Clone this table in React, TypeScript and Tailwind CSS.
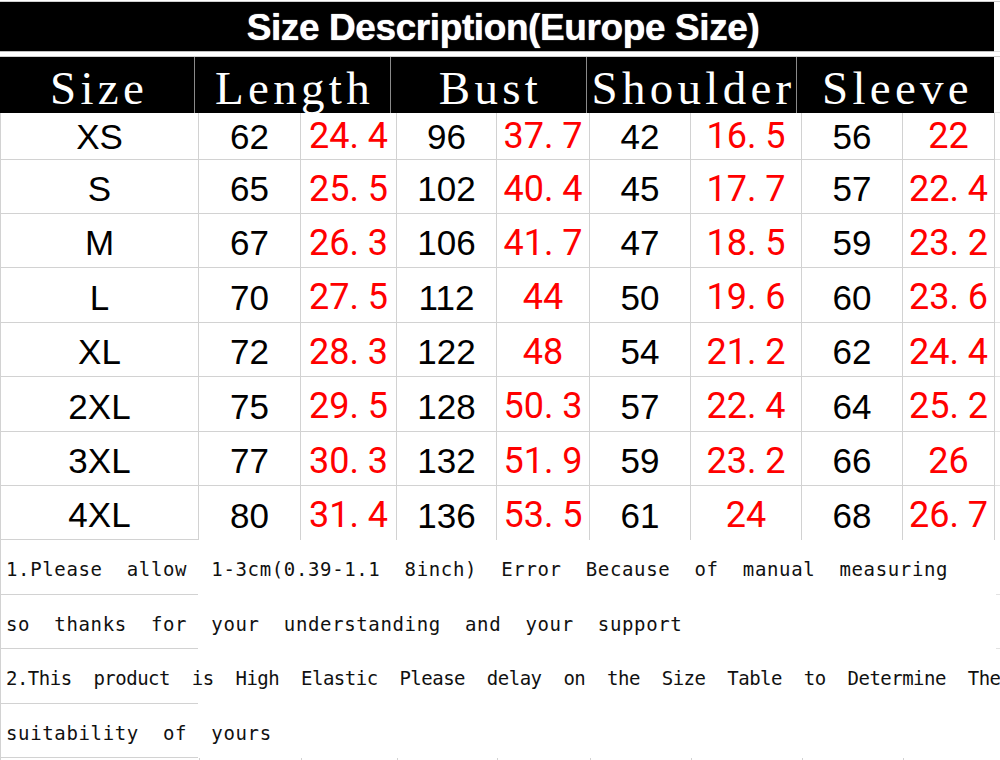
import React from "react";

const rows: [string, string, string, string, string, string, string, string, string][] = [
  ["XS", "62", "24. 4", "96", "37. 7", "42", "16. 5", "56", "22"],
  ["S", "65", "25. 5", "102", "40. 4", "45", "17. 7", "57", "22. 4"],
  ["M", "67", "26. 3", "106", "41. 7", "47", "18. 5", "59", "23. 2"],
  ["L", "70", "27. 5", "112", "44", "50", "19. 6", "60", "23. 6"],
  ["XL", "72", "28. 3", "122", "48", "54", "21. 2", "62", "24. 4"],
  ["2XL", "75", "29. 5", "128", "50. 3", "57", "22. 4", "64", "25. 2"],
  ["3XL", "77", "30. 3", "132", "51. 9", "59", "23. 2", "66", "26"],
  ["4XL", "80", "31. 4", "136", "53. 5", "61", "24", "68", "26. 7"],
];

const rowHeights = ["h-[47px]", "h-[54px]", "h-[54px]", "h-[55px]", "h-[54px]", "h-[55px]", "h-[54px]", "h-[54px]"];

const headers = ["Size", "Length", "Bust", "Shoulder", "Sleeve"];

const notes: { text: string; cls: string; h: string }[] = [
  { text: "1.Please  allow  1-3cm(0.39-1.1  8inch)  Error  Because  of  manual  measuring", cls: "tracking-[0.64px]", h: "h-[55px]" },
  { text: "so  thanks  for  your  understanding  and  your  support", cls: "tracking-[0.64px]", h: "h-[54px]" },
  { text: "2.This  product  is  High  Elastic  Please  delay  on  the  Size  Table  to  Determine  The", cls: "tracking-[-0.51px]", h: "h-[55px]" },
  { text: "suitability  of  yours", cls: "tracking-[0.64px]", h: "h-[54px]" },
];

export default function App() {
  return (
    <div className="w-[1000px] h-[760px] bg-white overflow-hidden flex flex-col">
      {/* Title */}
      <div className="h-[2px] border-b border-[#cfcfcf]" />
      <div className="flex">
        <div className="w-[994px] h-[50px] bg-black border-b border-[#bdbdbd] flex items-center justify-center">
          <span
            className="text-white font-bold text-[37px] leading-none tracking-[-0.4px] pl-[12px] pt-[2px]"
            style={{ fontFamily: '"Liberation Sans", Arial, sans-serif', textShadow: "0 0 1px #fff" }}
          >
            Size Description(Europe Size)
          </span>
        </div>
        <div className="flex-1 border-b border-[#e2e2e2]" />
      </div>
      <div className="h-[5px] border-b border-[#cfcfcf]" />

      {/* Header */}
      <div className="flex">
        <div className="grid grid-cols-[195px_196px_196px_210px_197px] h-[56px] bg-black">
          {headers.map((h, i) => (
            <div
              key={h}
              className={`flex items-center justify-center pt-[6px] ${i < 4 ? "border-r border-[#8a8a8a]" : ""}`}
            >
              <span
                className="text-white text-[47px] leading-none tracking-[4.3px] pl-[4px]"
                style={{ fontFamily: '"Liberation Serif", "Times New Roman", serif' }}
              >
                {h}
              </span>
            </div>
          ))}
        </div>
        <div className="flex-1 border-b border-[#e2e2e2]" />
      </div>

      {/* Data */}
      {rows.map((r, ri) => (
        <div key={r[0]} className="flex">
          <div
            className={`grid grid-cols-[198px_102px_96px_100px_93px_101px_111px_101px_92px] ${rowHeights[ri]} border-l border-[#d2d2d2]`}
          >
            {r.map((v, ci) => {
              const red = ci % 2 === 0 && ci > 0;
              const last = ri === rows.length - 1;
              const bottom = !last || ci === 0 ? "border-b" : "";
              return (
                <div
                  key={ci}
                  className={`flex items-center justify-center border-r ${bottom} border-[#d2d2d2] ${ri === 0 ? "" : "pt-[4px]"}`}
                >
                  <span
                    className={
                      red
                        ? "text-[#ff0000] text-[36px] leading-none font-normal"
                        : "text-black text-[35px] leading-none"
                    }
                    style={{
                      fontFamily: red
                        ? 'Roboto, "Liberation Sans", sans-serif'
                        : '"Liberation Sans", Arial, sans-serif',
                    }}
                  >
                    {v}
                  </span>
                </div>
              );
            })}
          </div>
          <div className={`flex-1 ${ri < rows.length - 1 ? "border-b" : ""} border-[#e2e2e2]`} />
        </div>
      ))}

      {/* Notes */}
      {notes.map((n, i) => (
        <div key={i} className={`relative flex items-center ${n.h} border-l border-[#d2d2d2]`}>
          <div className="absolute left-0 bottom-0 w-[197px] h-[1px] bg-[#d2d2d2]" />
          <span
            className={`relative pl-[5px] pt-[4px] whitespace-pre text-[19px] leading-none text-[#111] ${n.cls}`}
            style={{ fontFamily: '"DejaVu Sans Mono", monospace' }}
          >
            {n.text}
          </span>
          {(i === 0 || i === 1) && <div className="absolute right-0 bottom-0 w-[4px] h-[1px] bg-[#e2e2e2]" />}
        </div>
      ))}
      <div className="flex-1 grid grid-cols-[198px_102px_96px_100px_93px_101px_111px_101px_92px] border-l border-[#d2d2d2]">
        {Array.from({ length: 9 }).map((_, i) => (
          <div key={i} className={i === 0 ? "" : "border-l border-[#d2d2d2]"} />
        ))}
      </div>
    </div>
  );
}
